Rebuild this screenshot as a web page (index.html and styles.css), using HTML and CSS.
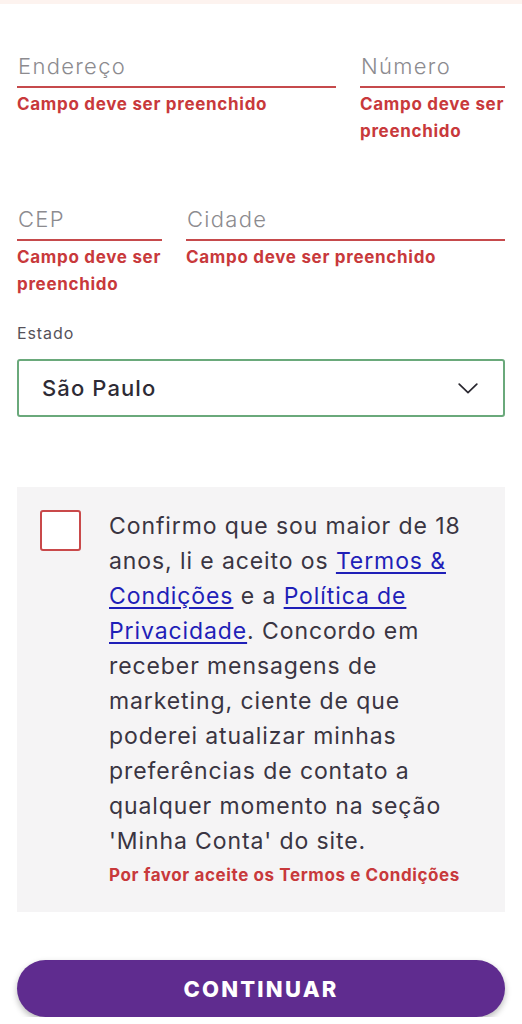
FILE: index.html
```html
<!DOCTYPE html>
<html lang="pt-BR">
<head>
<meta charset="utf-8">
<link rel="stylesheet" href="styles.css">
</head>
<body>
<div class="topbar"></div>
<main class="page">
  <div class="row row-a">
    <div class="field">
      <div class="input">Endereço</div>
      <div class="error">Campo deve ser preenchido</div>
    </div>
    <div class="field">
      <div class="input">Número</div>
      <div class="error">Campo deve ser preenchido</div>
    </div>
  </div>
  <div class="row row-b">
    <div class="field">
      <div class="input">CEP</div>
      <div class="error">Campo deve ser preenchido</div>
    </div>
    <div class="field">
      <div class="input">Cidade</div>
      <div class="error">Campo deve ser preenchido</div>
    </div>
  </div>
  <div class="select-group">
    <div class="select-label">Estado</div>
    <div class="select">
      <span>São Paulo</span>
      <svg class="chevron" width="20" height="11" viewBox="0 0 20 11"><path d="M1.2 1.2 L10 9.6 L18.8 1.2" fill="none" stroke="#2a2830" stroke-width="1.7" stroke-linecap="round" stroke-linejoin="round"/></svg>
    </div>
  </div>
  <div class="consent">
    <div class="checkbox"></div>
    <div class="consent-body">
      <p class="consent-text">Confirmo que sou maior de 18 anos, li e aceito os <a href="#">Termos &amp; Condições</a> e a <a href="#">Política de Privacidade</a>. Concordo em receber mensagens de marketing, ciente de que poderei atualizar minhas preferências de contato a qualquer momento na seção 'Minha Conta' do site.</p>
      <div class="consent-error">Por favor aceite os Termos e Condições</div>
    </div>
  </div>
  <button class="btn">CONTINUAR</button>
</main>
</body>
</html>
```

FILE: styles.css
```css
* { box-sizing: border-box; }
html, body { margin: 0; padding: 0; background: #ffffff; }
body { font-family: Inter, "Noto Sans", sans-serif; color: #36323f; }
.topbar { height: 4px; background: #fdf3ef; }
.page { padding: 0 17px; }
.row { display: grid; column-gap: 24px; }
.row-a { grid-template-columns: 1fr 145px; margin-top: 47px; }
.row-b { grid-template-columns: 145px 1fr; margin-top: 59px; }
.input {
  height: 37px;
  font-size: 22px;
  line-height: 30px;
  font-weight: 300;
  letter-spacing: 1.3px;
  color: #8c8b8f;
  border-bottom: 2px solid #c64a4c;
  padding-left: 1px;
}
.error {
  margin-top: 3px;
  font-size: 17px;
  line-height: 27px;
  font-weight: 700;
  letter-spacing: 0.7px;
  color: #c8393b;
}
.select-group { margin-top: 24px; }
.select-label { font-size: 16px; line-height: 22px; letter-spacing: 0.9px; color: #55525a; margin-bottom: 15px; }
.select {
  height: 58px;
  border: 2px solid #6aa97b;
  border-radius: 3px;
  display: flex;
  align-items: center;
  justify-content: space-between;
  padding: 0 25px 0 23px;
  font-size: 22px;
  font-weight: 500;
  letter-spacing: 1.1px;
  color: #2e2b35;
}
.chevron { display: block; }
.consent {
  margin-top: 70px;
  background: #f5f4f5;
  display: flex;
  gap: 28px;
  padding: 23px 24px 23px 23px;
}
.checkbox {
  flex: none;
  width: 41px;
  height: 41px;
  border: 2px solid #c9494a;
  border-radius: 3px;
  background: #ffffff;
}
.consent-body { flex: 1; margin-top: -1px; }
.consent-text {
  margin: 0;
  font-size: 23px;
  line-height: 35px;
  letter-spacing: 0.9px;
  color: #3a3542;
}
.consent-text a { color: #1f1fb8; text-decoration: underline; text-underline-offset: 3px; }
.consent-error {
  margin-top: 3px;
  font-size: 17px;
  line-height: 27px;
  font-weight: 700;
  letter-spacing: 0.6px;
  color: #c8393b;
}
.btn {
  display: block;
  width: 100%;
  height: 57px;
  margin-top: 48px;
  border: none;
  border-radius: 29px;
  background: #5f2c8f;
  color: #ffffff;
  font-family: Inter, "Noto Sans", sans-serif;
  font-size: 22px;
  font-weight: 800;
  letter-spacing: 2.2px;
  box-shadow: 0 3px 6px rgba(0, 0, 0, 0.28);
}
```
